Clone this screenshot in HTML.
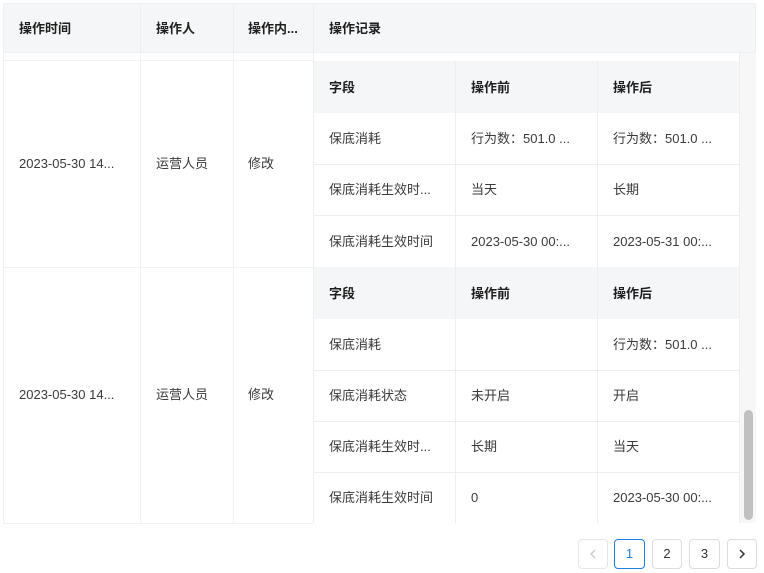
<!DOCTYPE html><html><head><meta charset="utf-8"><style>
*{margin:0;padding:0;box-sizing:border-box}
body{width:764px;height:573px;background:#fff;font-family:"Liberation Sans","Noto Sans CJK SC",sans-serif;font-size:13px;color:#3a3a3a;position:relative;overflow:hidden}
.a{position:absolute;white-space:nowrap;line-height:16px;height:16px;margin-top:1px}
.h{font-weight:bold;color:#1f1f1f}
.bg{position:absolute}
.pg{position:absolute;top:539px;height:30px;border:1px solid #ddd;border-radius:4px;color:#333;text-align:center;line-height:28px;font-size:13px}
</style></head><body>
<div class="bg" style="left:3px;top:3px;width:753px;height:50px;background:#f5f6f7;border:1px solid #eef0f2"></div>
<div class="bg" style="left:140px;top:3px;width:1px;height:50px;background:#eceef0"></div>
<div class="bg" style="left:233px;top:3px;width:1px;height:50px;background:#eceef0"></div>
<div class="bg" style="left:313px;top:3px;width:1px;height:50px;background:#eceef0"></div>
<div class="a h" style="left:19px;top:20px">操作时间</div>
<div class="a h" style="left:156px;top:20px">操作人</div>
<div class="a h" style="left:248px;top:20px">操作内...</div>
<div class="a h" style="left:329px;top:20px">操作记录</div>
<div class="bg" style="left:3px;top:53px;width:1px;height:470px;background:#f0f1f2"></div>
<div class="bg" style="left:140px;top:53px;width:1px;height:470px;background:#f0f1f2"></div>
<div class="bg" style="left:233px;top:53px;width:1px;height:470px;background:#f0f1f2"></div>
<div class="bg" style="left:313px;top:53px;width:1px;height:470px;background:#eceef0"></div>
<div class="bg" style="left:3px;top:60px;width:310px;height:1px;background:#f0f1f2"></div>
<div class="bg" style="left:3px;top:267px;width:310px;height:1px;background:#f0f1f2"></div>
<div class="bg" style="left:3px;top:523px;width:310px;height:1px;background:#f0f1f2"></div>
<div class="bg" style="left:739px;top:53px;width:17px;height:470px;background:#f7f7f7;border-left:1px solid #eee"></div>
<div class="bg" style="left:744px;top:410px;width:9px;height:110px;background:#c1c1c1;border-radius:5px"></div>
<div class="a" style="left:19px;top:155px">2023-05-30 14...</div>
<div class="a" style="left:156px;top:155px">运营人员</div>
<div class="a" style="left:248px;top:155px">修改</div>
<div class="bg" style="left:314px;top:61px;width:425px;height:52px;background:#f5f6f7"></div>
<div class="bg" style="left:455px;top:61px;width:1px;height:206px;background:#eceef0"></div>
<div class="bg" style="left:597px;top:61px;width:1px;height:206px;background:#eceef0"></div>
<div class="bg" style="left:314px;top:164px;width:425px;height:1px;background:#eceef0"></div>
<div class="bg" style="left:314px;top:215px;width:425px;height:1px;background:#eceef0"></div>
<div class="a h" style="left:329px;top:79px">字段</div>
<div class="a h" style="left:471px;top:79px">操作前</div>
<div class="a h" style="left:613px;top:79px">操作后</div>
<div class="a" style="left:329px;top:130px">保底消耗</div>
<div class="a" style="left:471px;top:130px">行为数：501.0 ...</div>
<div class="a" style="left:613px;top:130px">行为数：501.0 ...</div>
<div class="a" style="left:329px;top:181px">保底消耗生效时...</div>
<div class="a" style="left:471px;top:181px">当天</div>
<div class="a" style="left:613px;top:181px">长期</div>
<div class="a" style="left:329px;top:233px">保底消耗生效时间</div>
<div class="a" style="left:471px;top:233px">2023-05-30 00:...</div>
<div class="a" style="left:613px;top:233px">2023-05-31 00:...</div>
<div class="a" style="left:19px;top:386px">2023-05-30 14...</div>
<div class="a" style="left:156px;top:386px">运营人员</div>
<div class="a" style="left:248px;top:386px">修改</div>
<div class="bg" style="left:314px;top:267px;width:425px;height:52px;background:#f5f6f7"></div>
<div class="bg" style="left:455px;top:267px;width:1px;height:256px;background:#eceef0"></div>
<div class="bg" style="left:597px;top:267px;width:1px;height:256px;background:#eceef0"></div>
<div class="bg" style="left:314px;top:370px;width:425px;height:1px;background:#eceef0"></div>
<div class="bg" style="left:314px;top:421px;width:425px;height:1px;background:#eceef0"></div>
<div class="bg" style="left:314px;top:472px;width:425px;height:1px;background:#eceef0"></div>
<div class="a h" style="left:329px;top:285px">字段</div>
<div class="a h" style="left:471px;top:285px">操作前</div>
<div class="a h" style="left:613px;top:285px">操作后</div>
<div class="a" style="left:329px;top:336px">保底消耗</div>
<div class="a" style="left:613px;top:336px">行为数：501.0 ...</div>
<div class="a" style="left:329px;top:387px">保底消耗状态</div>
<div class="a" style="left:471px;top:387px">未开启</div>
<div class="a" style="left:613px;top:387px">开启</div>
<div class="a" style="left:329px;top:438px">保底消耗生效时...</div>
<div class="a" style="left:471px;top:438px">长期</div>
<div class="a" style="left:613px;top:438px">当天</div>
<div class="a" style="left:329px;top:489px">保底消耗生效时间</div>
<div class="a" style="left:471px;top:489px">0</div>
<div class="a" style="left:613px;top:489px">2023-05-30 00:...</div>
<div class="pg" style="left:578px;width:30px;border-color:#e6e6e6"><svg width="28" height="28" viewBox="0 0 28 28" style="display:block"><path d="M16 10 L12 14 L16 18" fill="none" stroke="#c8c8c8" stroke-width="1.3"/></svg></div>
<div class="pg" style="left:614px;width:31px;border-color:#1e7ee0;color:#1e7ee0">1</div>
<div class="pg" style="left:652px;width:30px">2</div>
<div class="pg" style="left:689px;width:31px">3</div>
<div class="pg" style="left:727px;width:30px"><svg width="28" height="28" viewBox="0 0 28 28" style="display:block"><path d="M12 10 L16 14 L12 18" fill="none" stroke="#333" stroke-width="1.5"/></svg></div>
</body></html>
